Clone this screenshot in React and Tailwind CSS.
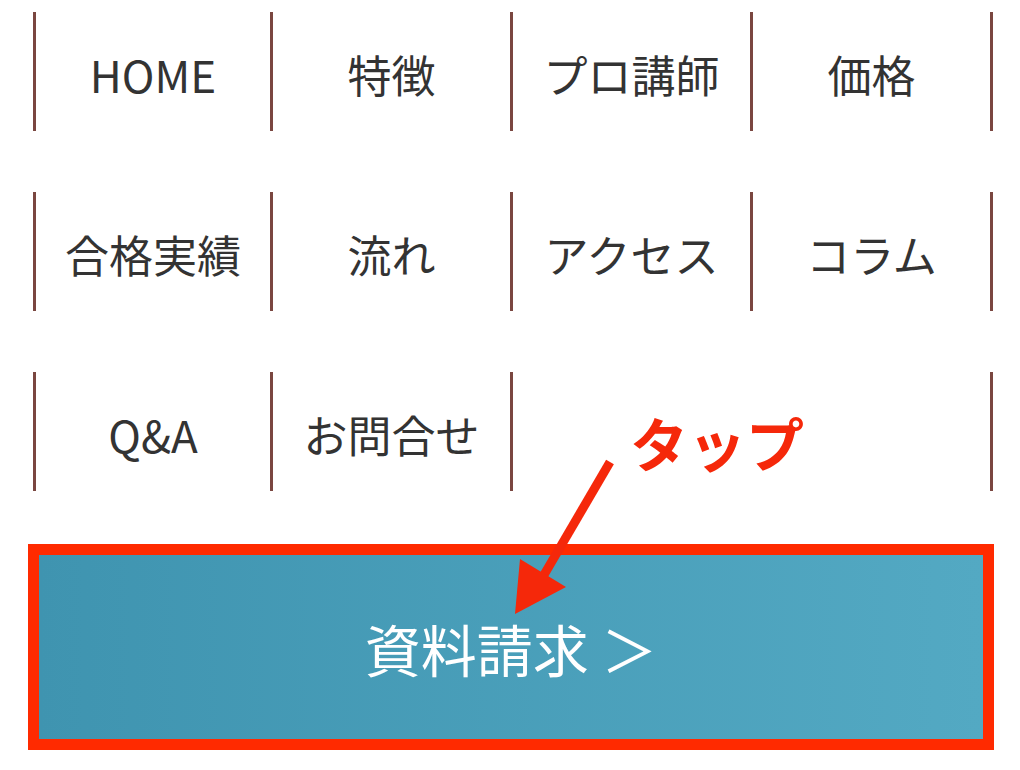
import React from "react";

const rows = [
  ["HOME", "特徴", "プロ講師", "価格"],
  ["合格実績", "流れ", "アクセス", "コラム"],
  ["Q&A", "お問合せ", "", ""],
];

const widths = ["w-[237px]", "w-[240px]", "w-[240px]", "w-[243px]"];

export default function App() {
  return (
    <div
      className="relative w-[1020px] h-[770px] bg-white overflow-hidden"
      style={{ fontFamily: '"Noto Sans CJK JP", "Noto Sans", sans-serif' }}
    >
      <div className="pt-[12px] pl-[33px] flex flex-col gap-[61px]">
        {rows.map((row, ri) => (
          <div key={ri} className="flex h-[119px]">
            {row.map((label, ci) => {
              const last = ci === 3;
              const noLeft = ri === 2 && ci === 3;
              return (
                <div
                  key={ci}
                  className={
                    widths[ci] +
                    (last ? " border-r-[3px]" : "") +
                    (noLeft ? " pl-[3px]" : " border-l-[3px]") +
                    " border-[#7a4640] flex items-center justify-center pt-[5px] text-[44px] leading-none text-[#333333] box-border"
                  }
                >
                  {label}
                </div>
              );
            })}
          </div>
        ))}
      </div>

      <div className="ml-[28px] mt-[53px] w-[966px] h-[206px] border-[11px] border-[#ff2a00] box-border">
        <div className="w-full h-full bg-gradient-to-r from-[#3f94b0] to-[#53a9c3] flex items-center justify-center text-white text-[56px] leading-none pt-[2px]">
          資料請求 ＞
        </div>
      </div>

      <div className="absolute left-[630px] top-[413px] text-[58px] font-bold leading-none text-[#f5280a]">
        タップ
      </div>

      <svg className="absolute left-0 top-0" width="1020" height="770" viewBox="0 0 1020 770">
        <line x1="610" y1="462" x2="541" y2="580" stroke="#f5280a" strokeWidth="9" />
        <polygon points="515,614 520,559 566,587" fill="#f5280a" />
      </svg>
    </div>
  );
}
